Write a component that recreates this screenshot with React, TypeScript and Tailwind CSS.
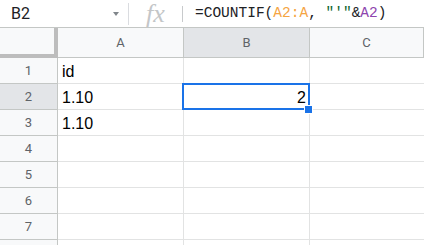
import React from "react"

const ROWS = ["1", "2", "3", "4", "5", "6", "7", ""]
const cellData: Record<string, string> = { A1: "id", A2: "1.10", A3: "1.10" }

const sans = "font-['Roboto','Liberation_Sans',sans-serif]"
const arial = "font-['Liberation_Sans',Arial,sans-serif]"

function FormulaBar() {
  return (
    <div className="flex h-[28px] items-center border-b border-[#c4c7c5] bg-white">
      <div className="flex w-[128px] items-center pl-[11px] pr-[9px]">
        <span className={`${sans} flex-1 text-[16px] text-[#202124]`}>B2</span>
        <span className="h-0 w-0 border-x-[3.5px] border-t-[4px] border-x-transparent border-t-[#80868b]" />
      </div>
      <div className="h-[22px] w-px bg-[#dadce0]" />
      <div className="flex w-[53px] items-center justify-center">
        <span className="font-['Liberation_Serif',serif] text-[26px] italic leading-[27px] text-[#c4c6c8]">fx</span>
      </div>
      <div className="h-[16px] w-px bg-[#c8cacc]" />
      <div className="pl-[12px] font-['Liberation_Mono',monospace] text-[14.5px] text-[#202124]">
        =COUNTIF(<span className="text-[#f5a442]">A2:A</span>, <span className="text-[#0d652d]">"'"</span>&amp;
        <span className="text-[#8e44ad]">A2</span>)
      </div>
    </div>
  )
}

export default function App() {
  return (
    <div className="h-[245px] w-[424px] overflow-hidden bg-white">
      <FormulaBar />
      <div className="grid grid-cols-[58px_126px_126px_1fr] grid-rows-[30px_repeat(8,26px)]">
        <div className="border-b-4 border-r-4 border-[#bdbdbd] bg-[#f8f9fa]" />
        {["A", "B", "C"].map((c) => (
          <div
            key={c}
            className={`${sans} flex items-center justify-center border-b border-r border-[#c4c7c5] text-[13px] text-[#5f6368] ${
              c === "B" ? "bg-[#e3e5e8]" : "bg-[#f8f9fa]"
            }`}
          >
            {c}
          </div>
        ))}
        {ROWS.map((r, i) => (
          <React.Fragment key={i}>
            <div
              className={`${sans} flex items-center justify-center border-b border-r border-[#c4c7c5] text-[13px] text-[#5f6368] ${
                r === "2" ? "bg-[#e3e5e8]" : "bg-[#f8f9fa]"
              }`}
            >
              {r}
            </div>
            <div className={`${arial} flex items-end border-b border-r border-[#e2e3e3] pb-[2px] pl-[4px] text-[16px] leading-[18px] text-black`}>
              {cellData["A" + r]}
            </div>
            <div
              className={`${arial} relative flex items-end justify-end border-b border-r border-[#e2e3e3] pb-[2px] pr-[3px] text-[16px] leading-[18px] text-black ${
                r === "2" ? "z-10" : ""
              }`}
            >
              {r === "2" && (
                <>
                  2
                  <div className="absolute -left-[2px] -top-[1px] bottom-[-1px] right-[-1px] border-2 border-[#1a73e8]" />
                  <div className="absolute -bottom-[5px] -right-[4px] h-[9px] w-[9px] border border-white bg-[#1a73e8]" />
                </>
              )}
            </div>
            <div className="border-b border-[#e2e3e3]" />
          </React.Fragment>
        ))}
      </div>
    </div>
  )
}
